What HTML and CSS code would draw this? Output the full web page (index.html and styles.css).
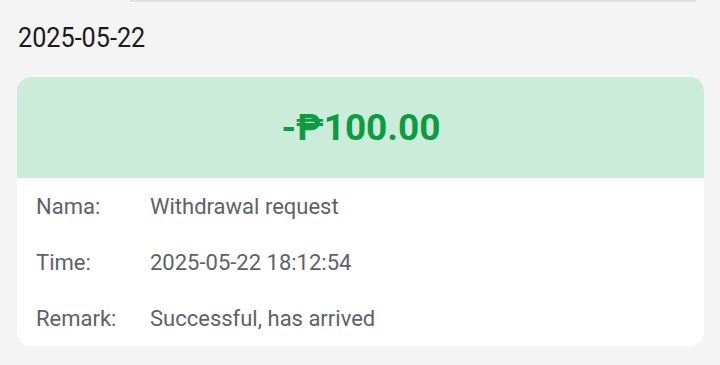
FILE: index.html
```html
<!DOCTYPE html>
<html lang="en">
<head>
<meta charset="utf-8">
<title>Withdrawal</title>
<link rel="stylesheet" href="styles.css">
</head>
<body>
<div class="top-rule"></div>
<div class="date"><span class="date-text">2025-05-22</span></div>
<div class="card">
  <div class="card-head">
    <span class="amount">-₱100.00</span>
  </div>
  <div class="card-body">
    <div class="row"><span class="label">Nama:</span><span class="value">Withdrawal request</span></div>
    <div class="row"><span class="label">Time:</span><span class="value">2025-05-22 18:12:54</span></div>
    <div class="row"><span class="label">Remark:</span><span class="value">Successful, has arrived</span></div>
  </div>
</div>
</body>
</html>
```

FILE: styles.css
```css
html, body {
  margin: 0;
  padding: 0;
  background: #f4f4f4;
  font-family: Roboto, "Noto Sans", sans-serif;
}
body {
  width: 720px;
  height: 365px;
  overflow: hidden;
}
.top-rule {
  height: 2px;
  margin: 0 24px 0 130px;
  background: #e1e1e1;
}
.date {
  margin: 19px 0 0 18px;
  height: 33px;
  font-size: 28px;
  color: #1b1b1b;
}
.date-text {
  display: inline-block;
  transform: scaleX(0.9);
  transform-origin: left center;
}
.card {
  margin: 23px 16px 0 17px;
  border-radius: 14px;
  overflow: hidden;
  background: #ffffff;
}
.card-head {
  height: 101px;
  background: #cbebdb;
  display: flex;
  align-items: center;
  justify-content: center;
}
.amount {
  font-size: 37px;
  font-weight: 700;
  color: #0a9c3e;
  margin-left: 1px;
}
.card-body {
  display: flex;
  flex-direction: column;
}
.row {
  height: 56px;
  display: flex;
  align-items: center;
  padding-left: 19px;
  font-size: 22px;
  color: #5d6267;
}
.label {
  width: 114px;
  flex: none;
}
```
